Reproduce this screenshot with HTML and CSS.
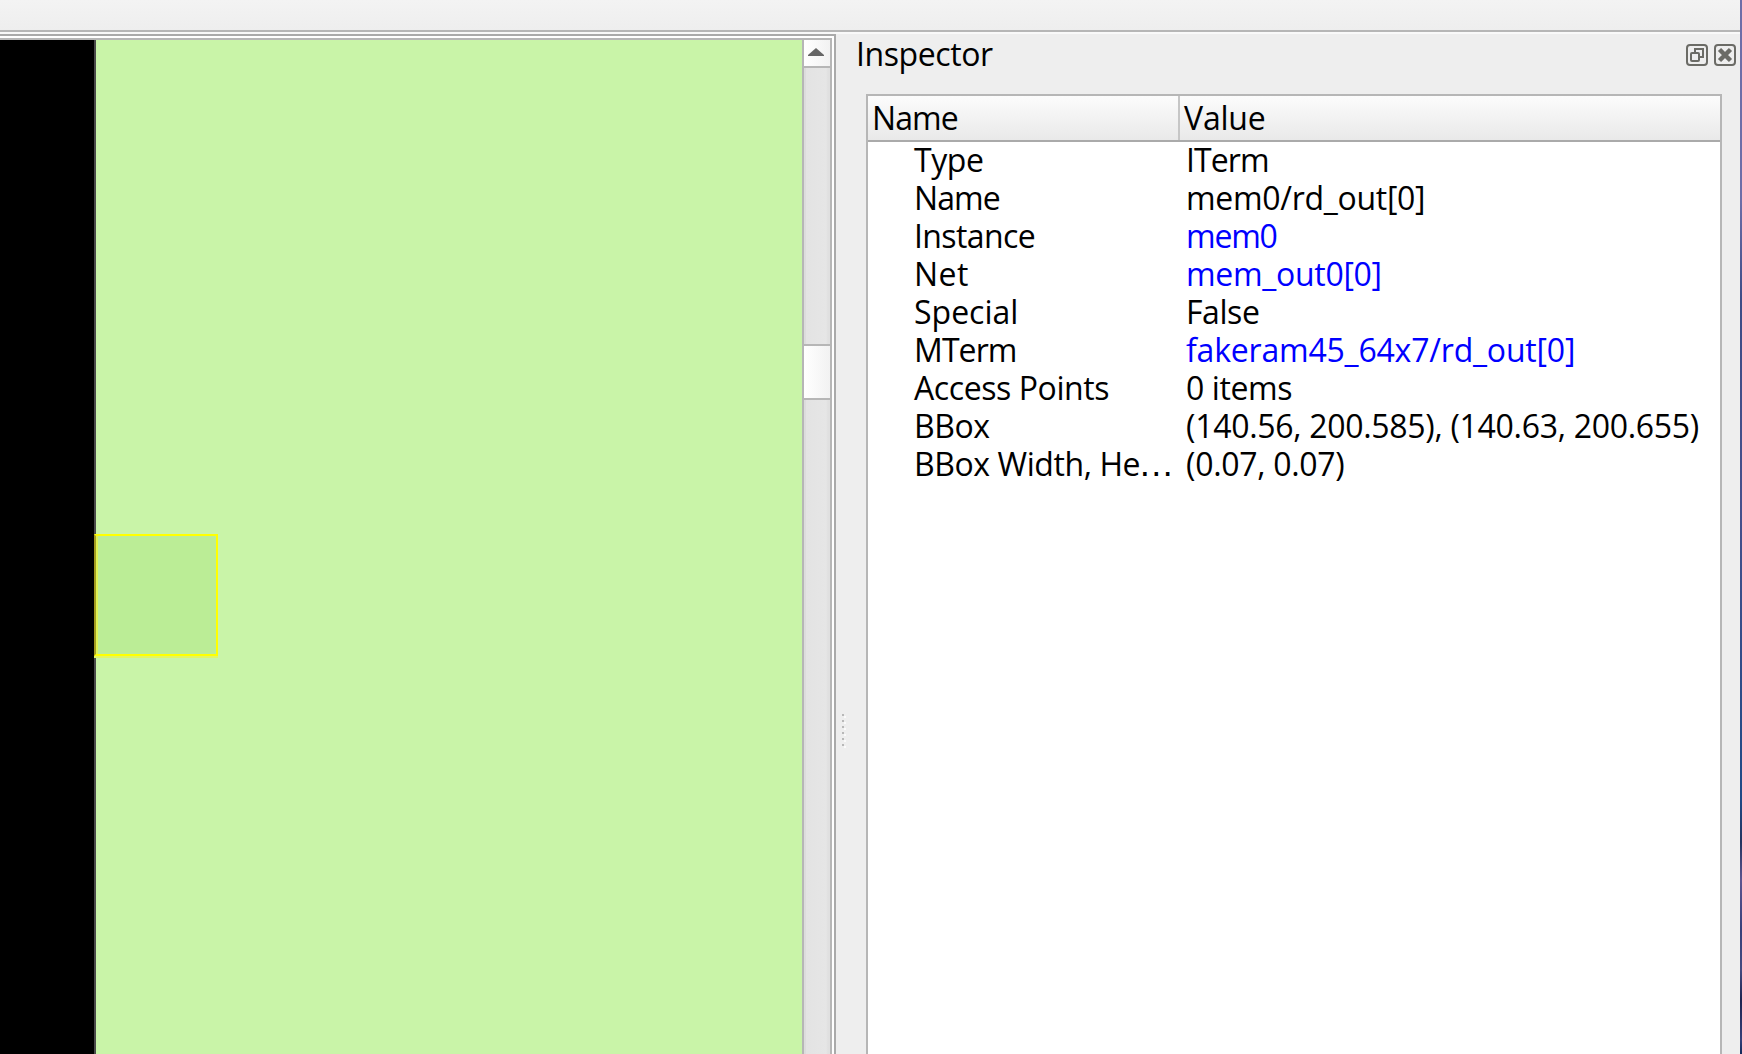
FILE: index.html
```html
<!DOCTYPE html>
<html lang="en">
<head>
<meta charset="utf-8">
<title>Inspector</title>
<link rel="stylesheet" href="styles.css">
</head>
<body>
<div class="desktop">
<div class="window">
  <div class="toolbar"></div>
  <div class="workspace">
    <div class="viewer">
      <div class="canvas">
        <div class="macro"></div>
        <div class="selection"></div>
      </div>
      <div class="scrollbar">
        <div class="scroll-up"><svg width="16" height="8" viewBox="0 0 16 8"><path d="M8 0l8 7v1H0V7z" fill="#666"/></svg></div>
        <div class="track-top"></div>
        <div class="thumb"></div>
      </div>
    </div>
    <div class="splitter"><i></i><i></i><i></i><i></i><i></i><i></i></div>
    <div class="dock">
      <div class="dock-title">
        <span class="s4">Inspector</span>
        <svg class="buttons" width="50" height="22" viewBox="0 0 50 22" fill="none" stroke="#6b6b66" stroke-width="2">
          <rect x="1" y="1" width="20" height="20" rx="3"/>
          <rect x="5" y="9" width="8" height="8" rx="1"/>
          <path d="M9 9V5h8v8h-4"/>
          <rect x="29" y="1" width="20" height="20" rx="3"/>
          <path d="M33.5 5.5l11 11M44.500 5.500l-11 11" stroke-width="4.5"/>
        </svg>
      </div>
      <div class="tree">
        <div class="header"><div class="s9">Name</div><div class="s2">Value</div></div>
        <div class="row"><span class="s4">Type</span><span class="s9">ITerm</span></div>
        <div class="row"><span class="s9">Name</span><span class="s3">mem0/rd_out[0]</span></div>
        <div class="row"><span class="s6">Instance</span><span class="link s12">mem0</span></div>
        <div class="row"><span class="w5">Net</span><span class="link s3">mem_out0[0]</span></div>
        <div class="row"><span>Special</span><span class="s4">False</span></div>
        <div class="row"><span class="s9">MTerm</span><span class="link s2">fakeram45_64x7/rd_out[0]</span></div>
        <div class="row"><span class="s4">Access Points</span><span class="s4">0 items</span></div>
        <div class="row"><span class="s4">BBox</span><span class="s3">(140.56, 200.585), (140.63, 200.655)</span></div>
        <div class="row"><span class="s4">BBox Width, He<span class="dots">…</span></span><span class="s3">(0.07, 0.07)</span></div>
      </div>
    </div>
  </div>
</div>
</div>
</body>
</html>
```
FILE: styles.css
```css
* { box-sizing: border-box; }
body { margin: 0; background: #eee; overflow: hidden; }
.desktop {
  width: 1742px; height: 1054px; padding-right: 2px;
  background: linear-gradient(#6d6ea8 0, #6d6ea8 200px, #3d4c86 300px, #46508c 500px, #1f4a86 800px, #23345f 842px, #5d5590 880px, #36407a 930px, #444a80 970px, #1d2450 1000px, #35407a 1040px, #122a5a 1054px);
}
.window {
  height: 1054px;
  display: flex; flex-direction: column;
  background: #eee;
  font: 32px/38px "Open Sans", sans-serif;
  color: #000;
}
.toolbar { height: 32px; flex: none; background: linear-gradient(#f3f3f3, #eee); border-bottom: 2px solid #b6b6b6; }
.workspace { flex: 1; display: flex; min-height: 0; border-top: 2px solid #f9f9f9; }

.viewer {
  width: 836px; display: flex;
  border-top: 2px solid #aaa; border-right: 2px solid #aaa;
  background: #fff; padding: 2px 2px 0 0;
}
.canvas { width: 802px; position: relative; display: flex; background: #000; border-top: 2px solid #b6b6b6; padding-left: 94px; }
.macro { flex: 1; background: #c9f4a8; border-left: 2px solid #4a4a4a; }
.selection {
  position: absolute; left: 94px; top: 494px; width: 124px; height: 122px;
  background: #bbed96; border: 2px solid #ff0; border-left-color: #a19a20;
  box-shadow: inset 2px 0 #dff255, 0 2px #e0f665;
}
.scrollbar {
  width: 30px; display: flex; flex-direction: column;
  border: 2px solid #b6b6b6; border-bottom: 0;
  background: linear-gradient(90deg, #dcdcdc 2px, #e3e3e3 2px, #e6e6e6 22px, #e0e0e0 24px);
}
.scroll-up { height: 28px; display: flex; align-items: center; justify-content: center; padding-bottom: 2px; padding-right: 2px; border-bottom: 2px solid #b6b6b6; background: linear-gradient(90deg, #fff, #f2f2f2); }
.track-top { height: 276px; }
.thumb { height: 56px; border: solid #b6b6b6; border-width: 2px 0; background: linear-gradient(90deg, #fff, #f2f2f2); }

.splitter { width: 18px; padding: 680px 0 0 6px; display: flex; flex-direction: column; gap: 4px; }
.splitter i { width: 2px; height: 2px; background: #b8b8b8; box-shadow: 2px 2px #fafafa; }

.dock { flex: 1; display: flex; flex-direction: column; padding-right: 18px; }
.dock-title { height: 60px; display: flex; justify-content: space-between; padding: 1px 0 0 2px; }
.buttons { margin: 9px -14px 0 0; }
.tree { flex: 1; margin-left: 12px; background: #fff; border: 2px solid #b6b6b6; border-bottom: 0; }
.header { height: 46px; display: grid; grid-template-columns: 312px 1fr; line-height: 44px; border-bottom: 2px solid #aaa; background: linear-gradient(#fcfcfc, #e9e9e9); }
.header div { padding-left: 4px; }
.header div:first-child { border-right: 2px solid #c6c6c6; }
.row { height: 38px; line-height: 36px; display: grid; grid-template-columns: 272px 1fr; padding-left: 46px; white-space: nowrap; }
.link { color: #00f; }
.dots { font: 36px/0 "Liberation Sans", sans-serif; margin-left: -2px; }

/* tracking */
.s2 { letter-spacing: -.2px; }
.s3 { letter-spacing: -.3px; }
.s4 { letter-spacing: -.42px; }
.s6 { letter-spacing: -.6px; }
.s9 { letter-spacing: -.9px; }
.s12 { letter-spacing: -1.2px; }
.w5 { letter-spacing: .5px; }
```
